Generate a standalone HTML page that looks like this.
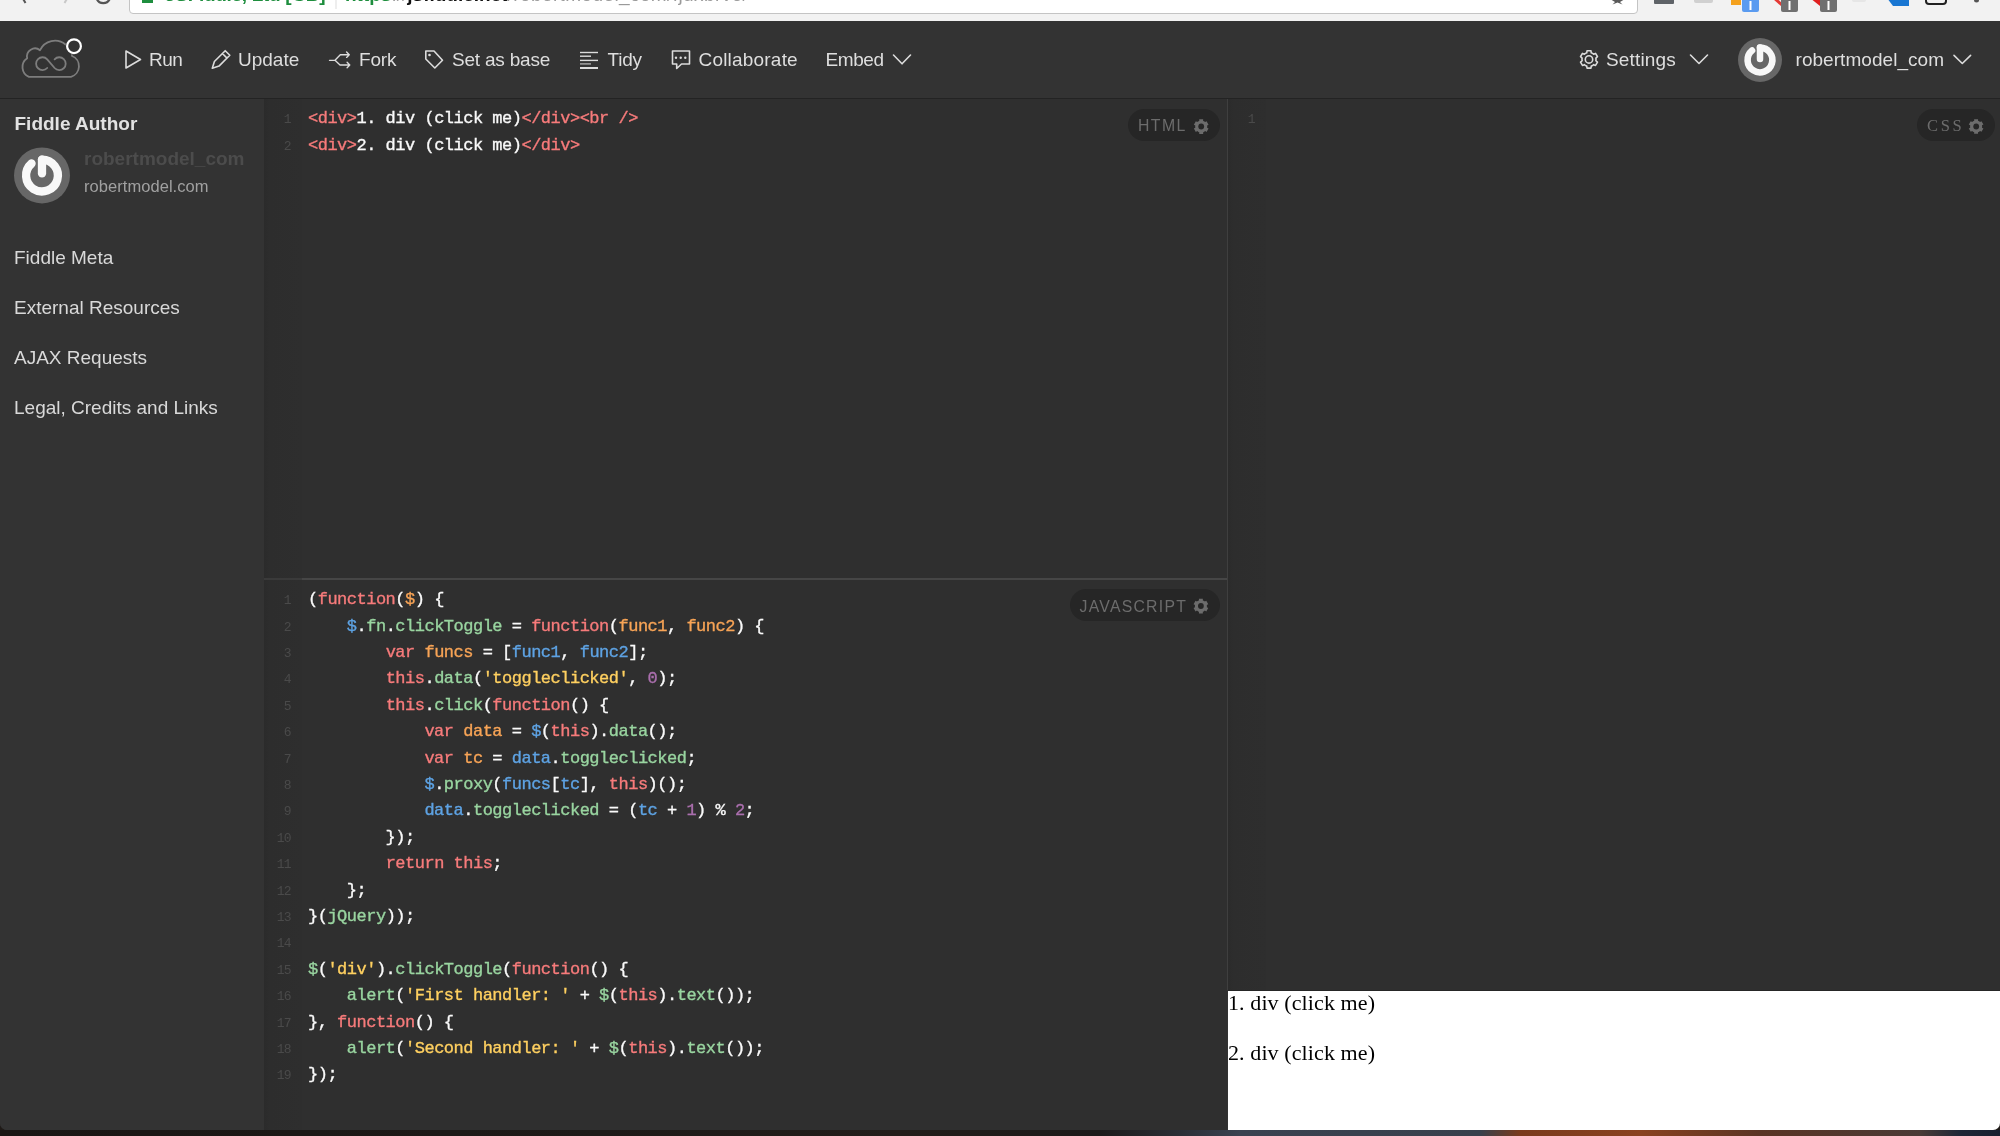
<!DOCTYPE html>
<html><head><meta charset="utf-8">
<style>
*{margin:0;padding:0;box-sizing:border-box}
html,body{width:2000px;height:1136px;overflow:hidden;background:#1f1a17;font-family:"Liberation Sans",sans-serif}
.a{position:absolute}
.win{left:0;top:0;width:2000px;height:1130px;overflow:hidden;border-radius:0 0 7px 7px;background:#333;will-change:transform}
#chrome{left:0;top:0;width:2000px;height:21px;background:#f2f2f2}
#addr{left:129px;top:-10px;width:1509px;height:24px;background:#fff;border:1px solid #c4c4c4;border-radius:0 0 4px 4px}
#nav{left:0;top:21px;width:2000px;height:77px;background:#333}
#navline{left:0;top:98px;width:2000px;height:1px;background:#232323}
.nt{position:absolute;font-size:19px;line-height:19px;color:#dedede;white-space:nowrap}
#side{left:0;top:99px;width:264px;height:1031px;background:#333}
.st{position:absolute;left:15px;font-size:19px;line-height:19px;color:#d9d9d9;white-space:nowrap}
.ed{background:#2f2f2f}
.gut{background:linear-gradient(90deg,#2b2b2b 0px,#2d2d2d 6px,#2e2e2e 38px)}
.code{position:absolute;left:308px;font-family:"Liberation Mono",monospace;font-size:17px;letter-spacing:-0.5px;line-height:26.39px;color:#fafafa;white-space:pre;-webkit-text-stroke:0.35px currentColor}
.ln{position:absolute;left:264px;width:26.8px;font-family:"Liberation Mono",monospace;font-size:13px;letter-spacing:-0.8px;color:#4a4a4a;text-align:right;line-height:26.39px}
.pill{position:absolute;height:32px;border-radius:16px;background:#262626}
.pt{position:absolute;font-size:15px;line-height:15px;letter-spacing:2.4px;color:#6c6c6c;white-space:nowrap}
.k{color:#f77b7b}
.o{color:#f8a456}
.b{color:#5ea3e4}
.g{color:#99d5a0}
.y{color:#ffd060}
.p{color:#ab6fae}
svg{position:absolute;overflow:visible}
</style></head><body>
<div class="a win">
<div id="chrome" class="a"></div>
<div id="addr" class="a"></div>
<svg class="a" style="left:0;top:0" width="2000" height="21">
<path d="M22 -3 L25.5 3" stroke="#555" stroke-width="2" fill="none"/>
<path d="M68 -3 L64.5 3" stroke="#c8c8c8" stroke-width="2" fill="none"/>
<path d="M96.5 -2 A7 7 0 0 0 110 -2" stroke="#555" stroke-width="2.2" fill="none"/>
<rect x="142" y="-4" width="11" height="7" fill="#1e8e3e"/>
<line x1="336" y1="0" x2="336" y2="9" stroke="#ddd" stroke-width="1"/>
<path d="M1610 -1 L1625 -1 L1620 2 L1622.5 4.5 L1617.5 2.5 L1612.5 4.5 L1615 2 Z" fill="#5a5a5a"/>
<rect x="1654" y="-3" width="20" height="7" fill="#5f6368" rx="1"/>
<rect x="1694" y="-3" width="19" height="6" fill="#d0d0d0" rx="2"/>
<rect x="1731" y="-3" width="10" height="8" fill="#f4a11d"/>
<rect x="1742" y="-2" width="17" height="14" fill="#5a9bf0" rx="2"/>
<rect x="1749.5" y="1" width="2" height="9" fill="#fff"/>
<path d="M1773 -3 L1782 5" stroke="#e53935" stroke-width="3"/>
<rect x="1781" y="-2" width="17" height="14" fill="#707070" rx="2"/>
<rect x="1788.5" y="1" width="2" height="9" fill="#fff"/>
<path d="M1810 -2 L1820 6 L1820 -2 Z" fill="#e02020"/>
<rect x="1820" y="-2" width="17" height="14" fill="#707070" rx="2"/>
<rect x="1827.5" y="1" width="2" height="9" fill="#fff"/>
<rect x="1852" y="-3" width="14" height="5" fill="#e6e6e6" rx="2"/>
<path d="M1887 -2 H1909 V6 H1893 Z" fill="#1976d2"/>
<rect x="1926" y="-4" width="20" height="8" fill="none" stroke="#222" stroke-width="2" rx="3"/>
<circle cx="1976.5" cy="0" r="2.5" fill="#555"/>
</svg>
<div class="a" style="left:165px;top:-15px;font-size:19px;font-weight:bold;line-height:20px;color:#1e8e3e;white-space:nowrap;letter-spacing:-0.3px">JSFiddle, Ltd [GB]</div>
<div class="a" style="left:345px;top:-15px;font-size:19px;font-weight:bold;line-height:20px;white-space:nowrap;color:#1e8e3e">https<span style="color:#a0a0a0;font-weight:normal">://</span><span style="color:#111">jsfiddle.net</span><span style="color:#9a9a9a;font-weight:normal;letter-spacing:0.4px">/robertmodel_com/fjdxbrv6/</span></div>
<div id="nav" class="a"></div>
<div id="navline" class="a"></div>
<div class="nt" style="left:149px;top:50px;letter-spacing:-0.5px">Run</div>
<div class="nt" style="left:238px;top:50px;letter-spacing:0px">Update</div>
<div class="nt" style="left:359px;top:50px;letter-spacing:-0.15px">Fork</div>
<div class="nt" style="left:452px;top:50px;letter-spacing:-0.2px">Set as base</div>
<div class="nt" style="left:607.5px;top:50px;letter-spacing:-0.2px">Tidy</div>
<div class="nt" style="left:698.5px;top:50px;letter-spacing:0.2px">Collaborate</div>
<div class="nt" style="left:825.5px;top:50px;letter-spacing:-0.4px">Embed</div>
<div class="nt" style="left:1606px;top:50px;letter-spacing:0.15px">Settings</div>
<div class="nt" style="left:1795.5px;top:50px;letter-spacing:0.05px">robertmodel_com</div>
<svg class="a" style="left:0;top:0" width="2000" height="100">
<g fill="none" stroke="#7d7d7d" stroke-width="1.8" stroke-linecap="round" stroke-linejoin="round">
<path d="M29 76.8 A10.6 10.6 0 0 1 27.2 58.2 A8 8 0 0 1 40 50.2 A16.5 16.5 0 0 1 65.5 44.5 A11 11 0 0 1 72 56 A11 11 0 0 1 71 76.8 Z"/>
<path d="M47.2 68 A6.4 6.4 0 1 1 47.2 59.3 L54.6 68 A6.4 6.4 0 1 0 54.6 59.3"/>
</g>
<circle cx="74" cy="46.2" r="8.5" fill="#333"/>
<circle cx="74" cy="46.2" r="6.9" fill="none" stroke="#fff" stroke-width="2.2"/>
<g fill="none" stroke="#dcdcdc" stroke-width="1.6" stroke-linecap="round" stroke-linejoin="round">
<path d="M126 51 L140.5 59.5 L126 68 Z"/>
<path d="M212.3 68.2 L214.4 61.5 L225.2 50.7 L229.8 55.3 L219 66.1 Z M222.4 53.5 L227 58.1"/>
<path stroke-width="1.35" d="M329.5 60.3 H335 L340.3 54.7 H349.3 M346.6 52 L349.3 54.7 L346.6 57.4 M335 60.3 L340 65 H349.8 M347.1 62.3 L349.8 65 L347.1 67.7"/>
<path d="M425.8 51 H434 L442.5 60.3 L434.8 68 L425.8 59 Z"/>
<path d="M672.5 51 H689.5 V64 H681.5 L676.7 68.5 V64 H672.5 Z"/>
<path d="M893.5 55 L902 63.8 L910.5 55"/>
<path d="M1690.5 55 L1699 63.5 L1707.5 55"/>
<path d="M1954 55.4 L1962.3 63.5 L1970.6 55.4"/>
<path d="M 1586.73 52.78 L 1587.06 50.71 L 1590.94 50.71 L 1591.27 52.78 L 1591.69 52.94 L 1592.10 53.12 L 1592.50 53.34 L 1592.88 53.58 L 1593.25 53.84 L 1593.60 54.13 L 1595.55 53.38 L 1597.49 56.74 L 1595.87 58.05 L 1595.94 58.50 L 1595.99 58.95 L 1596.00 59.40 L 1595.99 59.85 L 1595.94 60.30 L 1595.87 60.75 L 1597.49 62.06 L 1595.55 65.42 L 1593.60 64.67 L 1593.25 64.96 L 1592.88 65.22 L 1592.50 65.46 L 1592.10 65.68 L 1591.69 65.86 L 1591.27 66.02 L 1590.94 68.09 L 1587.06 68.09 L 1586.73 66.02 L 1586.31 65.86 L 1585.90 65.68 L 1585.50 65.46 L 1585.12 65.22 L 1584.75 64.96 L 1584.40 64.67 L 1582.45 65.42 L 1580.51 62.06 L 1582.13 60.75 L 1582.06 60.30 L 1582.01 59.85 L 1582.00 59.40 L 1582.01 58.95 L 1582.06 58.50 L 1582.13 58.05 L 1580.51 56.74 L 1582.45 53.38 L 1584.40 54.13 L 1584.75 53.84 L 1585.12 53.58 L 1585.50 53.34 L 1585.90 53.12 L 1586.31 52.94 Z"/>
<circle cx="1589" cy="59.4" r="3.7"/>
</g>
<g fill="#dcdcdc">
<circle cx="429.5" cy="55" r="1.3"/>
<circle cx="676" cy="57.8" r="1.2"/><circle cx="680.7" cy="57.8" r="1.2"/><circle cx="685.3" cy="57.8" r="1.2"/>
<rect x="580" y="51.8" width="18" height="1.4"/>
<rect x="580" y="55.5" width="11" height="1.4"/>
<rect x="580" y="59.7" width="18" height="1.4"/>
<rect x="580" y="63.2" width="11" height="1.4" fill="#a8a8a8"/>
<rect x="580" y="67" width="18" height="2"/>
</g>
<circle cx="1760" cy="60" r="22" fill="#676767"/>
<path d="M1752.03 50.50 A12.40 12.40 0 1 0 1760.00 47.60" fill="none" stroke="#f8f8f8" stroke-width="6.6" stroke-linecap="round"/>
<line x1="1760" y1="47.6" x2="1760" y2="59" stroke="#f8f8f8" stroke-width="6.5" stroke-linecap="round"/>
</svg>
<div id="side" class="a"></div>
<div class="st" style="left:14.5px;top:114px;font-weight:bold;color:#e2e2e2">Fiddle Author</div>
<svg class="a" style="left:0;top:0" width="264" height="220">
<circle cx="42" cy="175.4" r="28" fill="#676767"/>
<path d="M31.57 163.50 A15.90 15.90 0 1 0 42.00 159.60" fill="none" stroke="#f8f8f8" stroke-width="8.3" stroke-linecap="round"/>
<line x1="42" y1="159.6" x2="42" y2="173.4" stroke="#f8f8f8" stroke-width="8.3" stroke-linecap="round"/>
</svg>
<div class="st" style="left:84px;top:149px;font-weight:bold;color:#4c4c4c">robertmodel_com</div>
<div class="st" style="left:84px;top:178px;font-size:16.5px;line-height:16.5px;color:#a0a0a0;letter-spacing:0.05px">robertmodel.com</div>
<div class="st" style="left:14px;top:248px">Fiddle Meta</div>
<div class="st" style="left:14px;top:298px">External Resources</div>
<div class="st" style="left:14px;top:348px">AJAX Requests</div>
<div class="st" style="left:14px;top:398px">Legal, Credits and Links</div>
<div class="a ed" style="left:264px;top:99px;width:963px;height:479px"></div>
<div class="a gut" style="left:264px;top:99px;width:38px;height:479px"></div>
<div class="a" style="left:264px;top:578px;width:963px;height:2px;background:#464646"></div>
<div class="a" style="left:264px;top:578px;width:38px;height:2px;background:#3a3a3a"></div>
<div class="a ed" style="left:264px;top:580px;width:963px;height:550px"></div>
<div class="a gut" style="left:264px;top:580px;width:38px;height:550px"></div>
<div class="a" style="left:1227px;top:99px;width:1px;height:891px;background:#3f3f3f"></div>
<div class="a ed" style="left:1228px;top:99px;width:772px;height:891px"></div>
<div class="a gut" style="left:1228px;top:99px;width:38px;height:891px"></div>
<div class="a" style="left:1228px;top:990px;width:772px;height:1px;background:#262626"></div>
<div class="a" style="left:1228px;top:991px;width:772px;height:139px;background:#fff"></div>
<div class="code" style="top:106.30px"><span class="k">&lt;div&gt;</span>1. div (click me)<span class="k">&lt;/div&gt;&lt;br /&gt;</span>
<span class="k">&lt;div&gt;</span>2. div (click me)<span class="k">&lt;/div&gt;</span></div>
<div class="ln" style="top:107.30px">1<br>2</div>
<div class="code" style="top:587.30px">(<span class="k">function</span>(<span class="o">$</span>) {
    <span class="b">$</span>.<span class="g">fn</span>.<span class="g">clickToggle</span> = <span class="k">function</span>(<span class="o">func1</span>, <span class="o">func2</span>) {
        <span class="k">var</span> <span class="o">funcs</span> = [<span class="b">func1</span>, <span class="b">func2</span>];
        <span class="k">this</span>.<span class="g">data</span>(<span class="y">&#x27;toggleclicked&#x27;</span>, <span class="p">0</span>);
        <span class="k">this</span>.<span class="g">click</span>(<span class="k">function</span>() {
            <span class="k">var</span> <span class="o">data</span> = <span class="b">$</span>(<span class="k">this</span>).<span class="g">data</span>();
            <span class="k">var</span> <span class="o">tc</span> = <span class="b">data</span>.<span class="g">toggleclicked</span>;
            <span class="b">$</span>.<span class="g">proxy</span>(<span class="b">funcs</span>[<span class="b">tc</span>], <span class="k">this</span>)();
            <span class="b">data</span>.<span class="g">toggleclicked</span> = (<span class="b">tc</span> + <span class="p">1</span>) % <span class="p">2</span>;
        });
        <span class="k">return</span> <span class="k">this</span>;
    };
}(<span class="g">jQuery</span>));

<span class="g">$</span>(<span class="y">&#x27;div&#x27;</span>).<span class="g">clickToggle</span>(<span class="k">function</span>() {
    <span class="g">alert</span>(<span class="y">&#x27;First handler: &#x27;</span> + <span class="g">$</span>(<span class="k">this</span>).<span class="g">text</span>());
}, <span class="k">function</span>() {
    <span class="g">alert</span>(<span class="y">&#x27;Second handler: &#x27;</span> + <span class="g">$</span>(<span class="k">this</span>).<span class="g">text</span>());
});</div>
<div class="ln" style="top:588.30px">1<br>2<br>3<br>4<br>5<br>6<br>7<br>8<br>9<br>10<br>11<br>12<br>13<br>14<br>15<br>16<br>17<br>18<br>19</div>
<div class="ln" style="left:1228px;top:107.30px">1</div>
<div class="pill" style="left:1128px;top:109px;width:92px"></div>
<div class="pt" style="left:1138px;top:118.1px;font-size:15.8px;letter-spacing:1.45px">HTML</div>
<div class="pill" style="left:1070px;top:589px;width:150px"></div>
<div class="pt" style="left:1079.5px;top:599.1px;font-size:15.8px;letter-spacing:1.25px">JAVASCRIPT</div>
<div class="pill" style="left:1917px;top:109px;width:78px"></div>
<div class="pt" style="left:1927px;top:117.6px;font-family:'Liberation Serif',serif;font-size:16.5px;letter-spacing:2.7px">CSS</div>
<svg class="a" style="left:0;top:0" width="2000" height="700">
<path d="M 1199.27 120.92 L 1199.23 119.26 L 1203.17 119.26 L 1203.13 120.92 L 1203.50 121.06 L 1203.85 121.22 L 1204.20 121.40 L 1204.53 121.61 L 1204.85 121.84 L 1205.16 122.09 L 1206.57 121.23 L 1208.54 124.63 L 1207.08 125.43 L 1207.15 125.82 L 1207.19 126.21 L 1207.20 126.60 L 1207.19 126.99 L 1207.15 127.38 L 1207.08 127.77 L 1208.54 128.57 L 1206.57 131.97 L 1205.16 131.11 L 1204.85 131.36 L 1204.53 131.59 L 1204.20 131.80 L 1203.85 131.98 L 1203.50 132.14 L 1203.13 132.28 L 1203.17 133.94 L 1199.23 133.94 L 1199.27 132.28 L 1198.90 132.14 L 1198.55 131.98 L 1198.20 131.80 L 1197.87 131.59 L 1197.55 131.36 L 1197.24 131.11 L 1195.83 131.97 L 1193.86 128.57 L 1195.32 127.77 L 1195.25 127.38 L 1195.21 126.99 L 1195.20 126.60 L 1195.21 126.21 L 1195.25 125.82 L 1195.32 125.43 L 1193.86 124.63 L 1195.83 121.23 L 1197.24 122.09 L 1197.55 121.84 L 1197.87 121.61 L 1198.20 121.40 L 1198.55 121.22 L 1198.90 121.06 Z" fill="#6c6c6c"/><circle cx="1201.2" cy="126.5" r="2.9" fill="#262626"/>
<path d="M 1198.97 600.42 L 1198.93 598.76 L 1202.87 598.76 L 1202.83 600.42 L 1203.20 600.56 L 1203.55 600.72 L 1203.90 600.90 L 1204.23 601.11 L 1204.55 601.34 L 1204.86 601.59 L 1206.27 600.73 L 1208.24 604.13 L 1206.78 604.93 L 1206.85 605.32 L 1206.89 605.71 L 1206.90 606.10 L 1206.89 606.49 L 1206.85 606.88 L 1206.78 607.27 L 1208.24 608.07 L 1206.27 611.47 L 1204.86 610.61 L 1204.55 610.86 L 1204.23 611.09 L 1203.90 611.30 L 1203.55 611.48 L 1203.20 611.64 L 1202.83 611.78 L 1202.87 613.44 L 1198.93 613.44 L 1198.97 611.78 L 1198.60 611.64 L 1198.25 611.48 L 1197.90 611.30 L 1197.57 611.09 L 1197.25 610.86 L 1196.94 610.61 L 1195.53 611.47 L 1193.56 608.07 L 1195.02 607.27 L 1194.95 606.88 L 1194.91 606.49 L 1194.90 606.10 L 1194.91 605.71 L 1194.95 605.32 L 1195.02 604.93 L 1193.56 604.13 L 1195.53 600.73 L 1196.94 601.59 L 1197.25 601.34 L 1197.57 601.11 L 1197.90 600.90 L 1198.25 600.72 L 1198.60 600.56 Z" fill="#6c6c6c"/><circle cx="1200.9" cy="606" r="2.9" fill="#262626"/>
<path d="M 1974.17 120.82 L 1974.13 119.16 L 1978.07 119.16 L 1978.03 120.82 L 1978.40 120.96 L 1978.75 121.12 L 1979.10 121.30 L 1979.43 121.51 L 1979.75 121.74 L 1980.06 121.99 L 1981.47 121.13 L 1983.44 124.53 L 1981.98 125.33 L 1982.05 125.72 L 1982.09 126.11 L 1982.10 126.50 L 1982.09 126.89 L 1982.05 127.28 L 1981.98 127.67 L 1983.44 128.47 L 1981.47 131.87 L 1980.06 131.01 L 1979.75 131.26 L 1979.43 131.49 L 1979.10 131.70 L 1978.75 131.88 L 1978.40 132.04 L 1978.03 132.18 L 1978.07 133.84 L 1974.13 133.84 L 1974.17 132.18 L 1973.80 132.04 L 1973.45 131.88 L 1973.10 131.70 L 1972.77 131.49 L 1972.45 131.26 L 1972.14 131.01 L 1970.73 131.87 L 1968.76 128.47 L 1970.22 127.67 L 1970.15 127.28 L 1970.11 126.89 L 1970.10 126.50 L 1970.11 126.11 L 1970.15 125.72 L 1970.22 125.33 L 1968.76 124.53 L 1970.73 121.13 L 1972.14 121.99 L 1972.45 121.74 L 1972.77 121.51 L 1973.10 121.30 L 1973.45 121.12 L 1973.80 120.96 Z" fill="#6c6c6c"/><circle cx="1976.2" cy="126.5" r="2.9" fill="#262626"/>
</svg>
<div class="a" style="left:1228px;top:990px;font-family:'Liberation Serif',serif;font-size:22px;line-height:25px;color:#000;white-space:nowrap;letter-spacing:0.1px">1. div (click me)<br><br>2. div (click me)</div>
</div>
<div class="a" style="left:0;top:1130px;width:2000px;height:6px;background:linear-gradient(90deg,#1a1614 0%,#1e1a18 30%,#231d1a 45%,#1c1a1a 55%,#2a2e36 59%,#3a4250 62%,#38404c 74%,#7a3a1c 76%,#8a4220 82%,#5a3424 88%,#4a3a36 96%,#1e2636 98%,#182030 100%)"></div>
</body></html>
